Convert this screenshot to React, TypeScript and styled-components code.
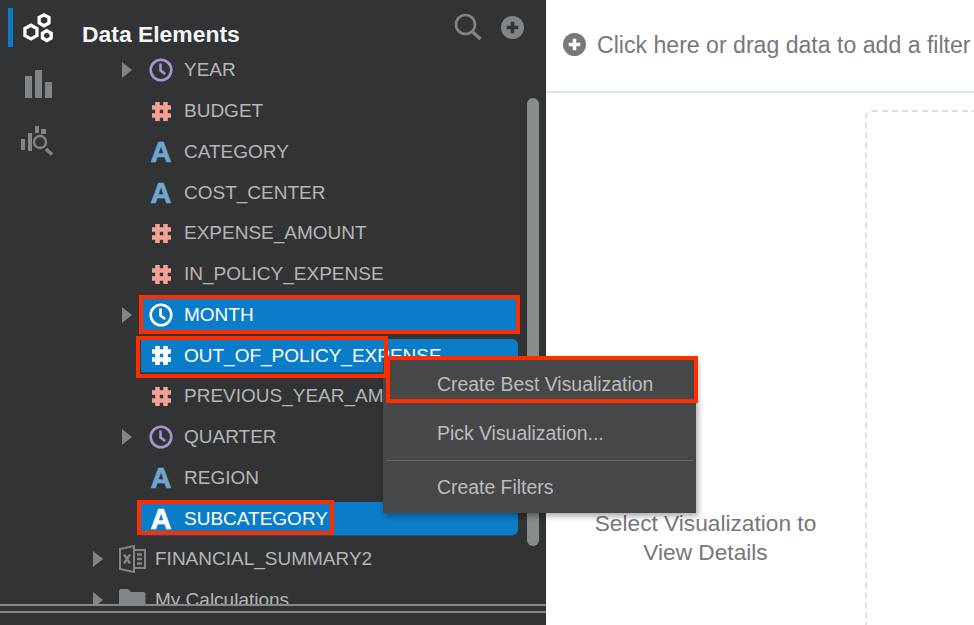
import React from "react";
import styled, { createGlobalStyle } from "styled-components";

const Global = createGlobalStyle`
  html, body { margin: 0; padding: 0; background: #fff; }
  #root { width: 974px; height: 625px; overflow: hidden; }
  * { box-sizing: border-box; }
`;

const Page = styled.div`
  position: relative;
  display: flex;
  width: 974px;
  height: 625px;
  overflow: hidden;
  font-family: "Liberation Sans", Arial, sans-serif;
`;

const Sidebar = styled.aside`
  display: flex;
  flex-direction: column;
  flex: 0 0 546px;
  height: 625px;
  background: #323335;
`;

const SidebarBody = styled.div`
  display: flex;
  flex: 0 0 604px;
  min-height: 0;
`;

const Rail = styled.nav`
  display: flex;
  flex-direction: column;
  flex: 0 0 66px;
  padding: 8px 0 0 8px;
`;

const RailItem = styled.div<{ $active?: boolean; $height: number; $indent: number; $drop: number; $after: number }>`
  height: ${(p) => p.$height}px;
  margin-bottom: ${(p) => p.$after}px;
  padding: ${(p) => p.$drop}px 0 0 ${(p) => p.$indent}px;
  border-left: 5px solid ${(p) => (p.$active ? "#0a7cc6" : "transparent")};
  svg { display: block; }
`;

const Panel = styled.div`
  position: relative;
  display: flex;
  flex-direction: column;
  flex: 1;
  min-width: 0;
`;

const PanelHeader = styled.header`
  display: flex;
  align-items: flex-start;
  justify-content: space-between;
  flex: 0 0 50px;
  padding: 13px 22px 0 16px;
`;

const Title = styled.h1`
  margin: 8px 0 0;
  font-size: 22.9px;
  line-height: 26px;
  font-weight: 700;
  color: #f4f4f4;
`;

const HeaderTools = styled.div`
  display: flex;
  align-items: center;
  gap: 19px;
`;

const Tree = styled.div`
  flex: 1;
  min-height: 0;
  overflow: hidden;
`;

const Row = styled.div<{ $level: number }>`
  display: flex;
  align-items: center;
  height: 40.75px;
  padding-left: ${(p) => (p.$level === 1 ? 24 : 53)}px;
  padding-right: 28px;
`;

const CaretSlot = styled.span`
  display: flex;
  flex: 0 0 22px;
  align-items: center;
  padding-left: 3px;
`;

const Caret = styled.span`
  display: block;
  width: 0;
  height: 0;
  border-left: 10px solid #7f8589;
  border-top: 8.5px solid transparent;
  border-bottom: 8.5px solid transparent;
`;

const RowBody = styled.div<{ $selected?: boolean }>`
  display: flex;
  flex: 1;
  align-items: center;
  min-width: 0;
  height: 33px;
  gap: 12px;
  padding-left: 9px;
  border-radius: 0 6px 6px 0;
  color: ${(p) => (p.$selected ? "#ffffff" : "#b5b6b6")};
  background: ${(p) => (p.$selected ? "#0a7cc8" : "transparent")};
  box-shadow: ${(p) => (p.$selected ? "0 1px 0 #14517a" : "none")};
`;

const IconCell = styled.span`
  display: flex;
  flex: 0 0 22px;
  width: 22px;
  min-width: 0;
  align-items: center;
  justify-content: center;
  height: 24px;
  svg { flex: none; }
`;

const AttrGlyph = styled.span<{ $selected?: boolean }>`
  font-size: 29px;
  line-height: 24px;
  font-weight: 700;
  -webkit-text-stroke: 0.7px currentColor;
  color: ${(p) => (p.$selected ? "#ffffff" : "#6fa6cf")};
`;

const Label = styled.span`
  font-size: 19px;
  line-height: 24px;
  white-space: nowrap;
`;

const PanelFooter = styled.footer`
  flex: 1;
  border-top: 2px solid #86898b;
  &::after {
    content: "";
    display: block;
    height: 2px;
    margin-top: 5px;
    background: #86898b;
  }
`;

const Scrollbar = styled.div`
  position: absolute;
  top: 98px;
  right: 7px;
  width: 12px;
  height: 448px;
  border-radius: 6px;
  background: #878c8f;
`;

const Main = styled.main`
  display: flex;
  flex-direction: column;
  flex: 1;
  min-width: 0;
  overflow: hidden;
  background: #fff;
`;

const FilterBar = styled.div`
  display: flex;
  flex: 0 0 93px;
  align-items: center;
  gap: 11px;
  padding: 0 0 2px 17px;
  border-bottom: 2px solid #dbe5ec;
  white-space: nowrap;
`;

const FilterText = styled.span`
  font-size: 23.1px;
  line-height: 28px;
  color: #777879;
`;

const Canvas = styled.div`
  display: flex;
  flex: 1;
  min-height: 0;
`;

const Placeholder = styled.div`
  flex: 0 0 319px;
  padding-top: 416px;
  text-align: center;
  font-size: 22.7px;
  line-height: 29px;
  color: #767778;
`;

const DropCard = styled.div`
  flex: 0 0 300px;
  height: 600px;
  margin-top: 17px;
  border: 2px dashed #dedfe0;
  border-radius: 7px;
`;

const Menu = styled.div`
  position: absolute;
  left: 383px;
  top: 359px;
  width: 313px;
  height: 154px;
  background: #464748;
  box-shadow: 2px 3px 6px rgba(0, 0, 0, 0.35);
  padding-top: 1px;
`;

const MenuItem = styled.div<{ $height: number }>`
  display: flex;
  align-items: center;
  height: ${(p) => p.$height}px;
  padding-left: 54px;
  font-size: 19.4px;
  color: #bcbdbd;
`;

const MenuDivider = styled.div`
  height: 1px;
  margin: 2px 3px 1px 3px;
  background: #66686a;
`;

const Callout = styled.div<{ $l: number; $t: number; $w: number; $h: number }>`
  position: absolute;
  left: ${(p) => p.$l}px;
  top: ${(p) => p.$t}px;
  width: ${(p) => p.$w}px;
  height: ${(p) => p.$h}px;
  border: 4.5px solid #ff2d00;
  pointer-events: none;
`;

const Clock = ({ color }: { color: string }) => (
  <svg width="24" height="24" viewBox="0 0 24 24" fill="none">
    <circle cx="12" cy="12" r="10.3" stroke={color} strokeWidth="2.6" />
    <path d="M11.5 5.5V12.6L16.2 16" stroke={color} strokeWidth="2.6" />
  </svg>
);

const Hash = ({ color }: { color: string }) => (
  <svg width="21" height="21" viewBox="0 0 21 21" fill="none">
    <path d="M6.5 1V20M14.5 1V20M1 6.5H20M1 14.5H20" stroke={color} strokeWidth="4.6" />
  </svg>
);

const Hexagons = () => (
  <svg viewBox="0 0 32 32" width="35" height="35" fill="none" stroke="#fff" strokeWidth="3">
    <path d="M22 3.5L26.5 6V11L22 13.5L17.500 11V6Z" />
    <path d="M10 13L15.500 16V22.500L10 25.500L4.500 22.500V16Z" />
    <path d="M24.500 18L28.500 20.300V24.700L24.500 27L20.500 24.700V20.300Z" />
  </svg>
);

const Bars = () => (
  <svg viewBox="0 0 32 32" width="32" height="32" fill="#7f8589">
    <rect x="3" y="8" width="7" height="22" />
    <rect x="13" y="2" width="7" height="28" />
    <rect x="23" y="14" width="7" height="16" />
  </svg>
);

const Analyze = () => (
  <svg viewBox="0 0 36 36" width="36" height="36" fill="none">
    <g fill="#7f8589">
      <rect x="1" y="14" width="4" height="11" />
      <rect x="8" y="8" width="4" height="18" />
      <rect x="15" y="1" width="4" height="7" />
      <rect x="21" y="4" width="5" height="5" />
    </g>
    <circle cx="20" cy="17" r="6" stroke="#7f8589" strokeWidth="2.4" />
    <path d="M26 24L32 29.500" stroke="#7f8589" strokeWidth="3.4" />
  </svg>
);

const SearchIcon = () => (
  <svg viewBox="0 0 28 28" width="28" height="28" fill="none" stroke="#7f8589">
    <circle cx="11.500" cy="11.500" r="9.500" strokeWidth="2.600" />
    <path d="M18 18.500L26.500 26" strokeWidth="3.400" />
  </svg>
);

const PlusCircle = ({ color, cross, size }: { color: string; cross: string; size: number }) => (
  <svg viewBox="0 0 24 24" width={size} height={size}>
    <circle cx="12" cy="12" r="12" fill={color} />
    <path d="M12 6V18M6 12H18" stroke={cross} strokeWidth="3.600" />
  </svg>
);

const ExcelIcon = () => (
  <svg viewBox="0 0 28 28" width="28" height="28" fill="none" stroke="#7f8589">
    <path d="M2 4L16 1V27L2 24Z" strokeWidth="2" />
    <path d="M16 5H27V23H16" strokeWidth="2" />
    <path d="M6 9.500L12 18.500M12 9.500L6 18.500" strokeWidth="2.400" />
    <path d="M19 9.500H24M19 14H24M19 18.500H24" strokeWidth="2.400" />
  </svg>
);

const FolderIcon = () => (
  <svg viewBox="0 0 28 24" width="28" height="24" fill="#7f8589">
    <path d="M1 3C1 2 2 1 3 1H10L13 4H26C27 4 27.500 5 27.500 6V22H1Z" />
  </svg>
);

type Kind = "clock" | "hash" | "attr";
type Item = { name: string; kind: Kind; caret?: boolean; selected?: boolean };

const items: Item[] = [
  { name: "YEAR", kind: "clock", caret: true },
  { name: "BUDGET", kind: "hash" },
  { name: "CATEGORY", kind: "attr" },
  { name: "COST_CENTER", kind: "attr" },
  { name: "EXPENSE_AMOUNT", kind: "hash" },
  { name: "IN_POLICY_EXPENSE", kind: "hash" },
  { name: "MONTH", kind: "clock", caret: true, selected: true },
  { name: "OUT_OF_POLICY_EXPENSE", kind: "hash", selected: true },
  { name: "PREVIOUS_YEAR_AMOUNT", kind: "hash" },
  { name: "QUARTER", kind: "clock", caret: true },
  { name: "REGION", kind: "attr" },
  { name: "SUBCATEGORY", kind: "attr", selected: true },
];

const KindIcon = ({ kind, selected }: { kind: Kind; selected?: boolean }) => {
  if (kind === "clock") return <Clock color={selected ? "#fff" : "#a793d0"} />;
  if (kind === "hash") return <Hash color={selected ? "#fff" : "#f2a294"} />;
  return <AttrGlyph $selected={selected}>A</AttrGlyph>;
};

export default function App() {
  return (
    <Page>
      <Global />
      <Sidebar>
        <SidebarBody>
          <Rail>
            <RailItem $active $height={39} $indent={7} $drop={3} $after={21}>
              <Hexagons />
            </RailItem>
            <RailItem $height={32} $indent={9} $drop={0} $after={25}>
              <Bars />
            </RailItem>
            <RailItem $height={36} $indent={7} $drop={0} $after={0}>
              <Analyze />
            </RailItem>
          </Rail>
          <Panel>
            <PanelHeader>
              <Title>Data Elements</Title>
              <HeaderTools>
                <SearchIcon />
                <PlusCircle color="#7f8589" cross="#323335" size={23} />
              </HeaderTools>
            </PanelHeader>
            <Tree>
              {items.map((it) => (
                <Row key={it.name} $level={2}>
                  <CaretSlot>{it.caret && <Caret />}</CaretSlot>
                  <RowBody $selected={it.selected}>
                    <IconCell><KindIcon kind={it.kind} selected={it.selected} /></IconCell>
                    <Label>{it.name}</Label>
                  </RowBody>
                </Row>
              ))}
              <Row $level={1}>
                <CaretSlot><Caret /></CaretSlot>
                <RowBody>
                  <IconCell><ExcelIcon /></IconCell>
                  <Label>FINANCIAL_SUMMARY2</Label>
                </RowBody>
              </Row>
              <Row $level={1}>
                <CaretSlot><Caret /></CaretSlot>
                <RowBody>
                  <IconCell><FolderIcon /></IconCell>
                  <Label>My Calculations</Label>
                </RowBody>
              </Row>
            </Tree>
            <Scrollbar />
          </Panel>
        </SidebarBody>
        <PanelFooter />
      </Sidebar>
      <Main>
        <FilterBar>
          <PlusCircle color="#777a7c" cross="#ffffff" size={23} />
          <FilterText>Click here or drag data to add a filter</FilterText>
        </FilterBar>
        <Canvas>
          <Placeholder>
            Select Visualization to
            <br />
            View Details
          </Placeholder>
          <DropCard />
        </Canvas>
      </Main>
      <Menu>
        <MenuItem $height={49}>Create Best Visualization</MenuItem>
        <MenuItem $height={49}>Pick Visualization...</MenuItem>
        <MenuDivider />
        <MenuItem $height={50}>Create Filters</MenuItem>
      </Menu>
      <Callout $l={139} $t={294.5} $w={381} $h={39} />
      <Callout $l={136} $t={336} $w={252} $h={42} />
      <Callout $l={386} $t={356} $w={312} $h={47} />
      <Callout $l={137} $t={499.5} $w={197} $h={35.5} />
    </Page>
  );
}
